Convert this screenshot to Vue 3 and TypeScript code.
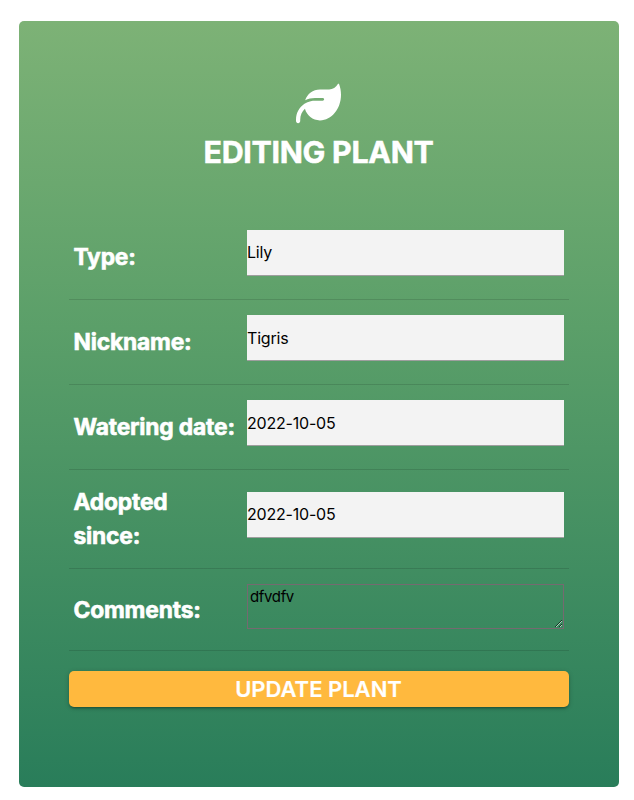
<script setup lang="ts">
import { reactive } from 'vue'

interface Field {
  key: 'type' | 'nickname' | 'watering' | 'adopted'
  label: string
}

const fields: Field[] = [
  { key: 'type', label: 'Type:' },
  { key: 'nickname', label: 'Nickname:' },
  { key: 'watering', label: 'Watering date:' },
  { key: 'adopted', label: 'Adopted since:' },
]

const plant = reactive({
  type: 'Lily',
  nickname: 'Tigris',
  watering: '2022-10-05',
  adopted: '2022-10-05',
  comments: 'dfvdfv',
})
</script>

<template>
  <form class="card" @submit.prevent>
    <header class="heading">
      <svg class="leaf" viewBox="0 0 512 512" aria-hidden="true">
        <path
          fill="currentColor"
          d="M272 96c-78.6 0-145.1 51.5-167.7 122.5c33.6-17 71.5-26.5 111.7-26.5h88c8.8 0 16 7.2 16 16s-7.2 16-16 16H216c-16.6 0-32.7 1.9-48.3 5.4c-25.9 5.9-49.9 16.4-71.4 30.7C38.3 298.8 0 364.9 0 440v16c0 13.3 10.7 24 24 24s24-10.7 24-24V440c0-48.7 20.7-92.5 53.8-123.2C121.6 392.3 190.3 448 272 448l1 0c132.1-.7 239-130.9 239-291.4c0-42.6-7.5-83.1-21.1-119.6c-2.6-6.9-12.7-6.6-16.2-.1C455.9 72.1 418.7 96 376 96L272 96z"
        />
      </svg>
      <h1 class="title">EDITING PLANT</h1>
    </header>
    <div class="rows">
      <div v-for="field in fields" :key="field.key" class="row">
        <label class="label" :for="field.key">{{ field.label }}</label>
        <input
          :id="field.key"
          v-model="plant[field.key]"
          class="input"
          :class="{ raised: field.key === 'type' || field.key === 'adopted' }"
          type="text"
        />
      </div>
      <div class="row row-comments">
        <label class="label" for="comments">Comments:</label>
        <textarea id="comments" v-model="plant.comments" class="comments"></textarea>
      </div>
    </div>
    <button class="submit" type="submit">UPDATE PLANT</button>
  </form>
</template>

<style>
body {
  background: #fff;
}
</style>

<style scoped>
.card {
  box-sizing: border-box;
  width: 600px;
  height: 766px;
  margin: 21px 0 0 19px;
  padding: 60px 50px 0;
  border-radius: 5px;
  background: linear-gradient(#7db276, #5b9f69 40%, #297d5a);
  color: #fff;
  font-family: Inter, sans-serif;
}

.heading {
  display: flex;
  flex-direction: column;
  align-items: center;
  height: 134px;
}

.leaf {
  display: block;
  width: 45px;
  height: 45px;
  margin-right: 2px;
}

.title {
  margin: 8px 1px 0 0;
  font-size: 30.4px;
  line-height: 36px;
  font-weight: 700;
  letter-spacing: -0.3px;
  -webkit-text-stroke: 0.5px #fff;
}

.row {
  box-sizing: border-box;
  display: grid;
  grid-template-columns: 163px 317px;
  column-gap: 10px;
  align-items: center;
  min-height: 85px;
  padding: 15px 5px;
  border-bottom: 1px solid rgba(0, 0, 0, 0.12);
}

.label {
  margin-left: -0.5px;
  font-size: 22.8px;
  line-height: 34px;
  font-weight: 700;
  letter-spacing: -0.18px;
  -webkit-text-stroke: 0.6px #fff;
}

.input {
  box-sizing: border-box;
  width: 100%;
  height: 46px;
  margin: 0 0 8px;
  padding: 0;
  border: 0;
  border-bottom: 1px solid #9e9e9e;
  border-radius: 0;
  outline: none;
  background: #f3f3f3;
  color: #000;
  font: 16px Inter, sans-serif;
  letter-spacing: -0.2px;
}

.raised {
  padding-bottom: 2px;
}

.row-comments {
  min-height: 82px;
}

.comments {
  box-sizing: border-box;
  display: block;
  width: 100%;
  height: 45px;
  margin: 0 0 6px;
  padding: 2px;
  border: 1px solid #756a70;
  border-radius: 0;
  outline: none;
  overflow: auto;
  resize: both;
  background: transparent;
  color: #000;
  font: 15px Inter, sans-serif;
  letter-spacing: -0.35px;
}

.submit {
  display: block;
  width: 500px;
  height: 36px;
  margin: 20px 0 0;
  padding: 0 1px 0 0;
  border: 0;
  border-radius: 5px;
  background: #ffb93e;
  box-shadow: 0 2px 2px rgba(0, 0, 0, 0.14), 0 3px 1px -2px rgba(0, 0, 0, 0.12), 0 1px 5px rgba(0, 0, 0, 0.2);
  color: #fff;
  font: 600 22px / 36px Inter, sans-serif;
  -webkit-text-stroke: 0.2px #fff;
}
</style>
